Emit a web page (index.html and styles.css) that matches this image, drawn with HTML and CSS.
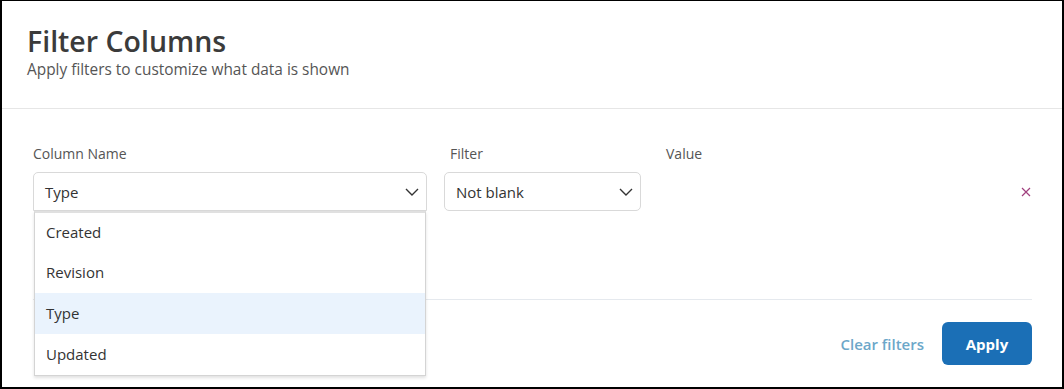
FILE: index.html
```html
<!DOCTYPE html>
<html lang="en">
<head>
    <meta charset="UTF-8">
    <meta name="viewport" content="width=device-width, initial-scale=1.0">
    <title>Filter Columns</title>
    <link rel="stylesheet" href="styles.css">
</head>
<body>
    <div class="dialog">
        <div class="dialog-header">
            <h1>Filter Columns</h1>
            <p>Apply filters to customize what data is shown</p>
        </div>

        <div class="dialog-body">
            <div class="filter-grid">
                <label class="field-label">Column Name</label>
                <label class="field-label filter-label">Filter</label>
                <label class="field-label value-label">Value</label>
                <span></span>

                <div class="select-wrap">
                    <div class="select open">
                        <span>Type</span>
                        <svg class="chevron" width="14" height="8" viewBox="0 0 14 8"><path d="M1 1l6 6 6-6" fill="none" stroke="#333" stroke-width="1.4"/></svg>
                    </div>
                    <ul class="dropdown">
                        <li>Created</li>
                        <li>Revision</li>
                        <li class="active">Type</li>
                        <li>Updated</li>
                    </ul>
                </div>
                <div class="select">
                    <span>Not blank</span>
                    <svg class="chevron" width="14" height="8" viewBox="0 0 14 8"><path d="M1 1l6 6 6-6" fill="none" stroke="#333" stroke-width="1.4"/></svg>
                </div>
                <div></div>
                <button class="remove" title="Remove">
                    <svg width="10" height="10" viewBox="0 0 10 10"><path d="M1 1l8 8M9 1l-8 8" stroke="#a0407e" stroke-width="1.2"/></svg>
                </button>
            </div>

            <div class="dialog-footer">
                <button class="link-btn">Clear filters</button>
                <button class="primary-btn">Apply</button>
            </div>
        </div>
    </div>
</body>
</html>
```

FILE: styles.css
```css
body {
    font-family: "Open Sans", Arial, sans-serif;
    margin: 0;
    padding: 0;
    background: #fff;
}
.dialog {
    width: 1064px;
    height: 389px;
    box-sizing: border-box;
    border: 2px solid #000;
    border-top-width: 1px;
    overflow: hidden;
}
.dialog-header {
    padding: 21px 25px 29px;
    border-bottom: 1px solid #e6e6e6;
}
.dialog-header h1 {
    margin: 0;
    font-size: 28.5px;
    font-weight: 600;
    line-height: 38px;
    color: #3b3b3b;
}
.dialog-header p {
    margin: 0;
    font-size: 15.4px;
    line-height: 19px;
    color: #555;
}
.dialog-body {
    padding: 35px 30px 0 31px;
}
.filter-grid {
    display: grid;
    grid-template-columns: 394px 197px 1fr 13px;
    column-gap: 17px;
    row-gap: 8px;
    align-items: center;
}
.field-label {
    font-size: 14px;
    line-height: 20px;
    color: #555;
}
.filter-label {
    padding-left: 6px;
}
.value-label {
    margin-left: -17px;
    padding-left: 25px;
}
.select-wrap {
    position: relative;
}
.select {
    height: 39px;
    box-sizing: border-box;
    border: 1px solid #d9d9d9;
    border-radius: 5px;
    display: flex;
    align-items: center;
    justify-content: space-between;
    padding: 0 7px 0 11px;
    font-size: 15px;
    color: #333;
}
.select.open {
    border-bottom-left-radius: 0;
    border-bottom-right-radius: 0;
}
.dropdown {
    position: absolute;
    top: 39px;
    left: 1px;
    right: 1px;
    margin: 0;
    padding: 0;
    list-style: none;
    background: #fff;
    border: 1px solid #d4d4d4;
    border-top: 2px solid #e0e0e0;
    box-shadow: 0 2px 3px rgba(0, 0, 0, 0.12);
    z-index: 2;
}
.dropdown li {
    height: 41px;
    line-height: 41px;
    padding: 0 11px;
    font-size: 15px;
    color: #333;
}
.dropdown li:first-child {
    height: 39px;
    line-height: 39px;
}
.dropdown li.active {
    background: #eaf3fd;
}
.remove {
    border: 0;
    background: none;
    padding: 0;
    display: flex;
    justify-content: center;
    align-items: center;
    cursor: pointer;
}
.dialog-footer {
    margin-top: 88px;
    border-top: 1px solid #e5e9ee;
    padding-top: 22px;
    display: flex;
    justify-content: flex-end;
    align-items: center;
    gap: 18px;
}
.link-btn {
    border: 0;
    background: none;
    padding: 0;
    font-family: inherit;
    font-size: 15px;
    font-weight: 600;
    color: #6ca7c9;
}
.primary-btn {
    width: 90px;
    height: 43px;
    border: 0;
    border-radius: 6px;
    background: #1b6fb6;
    color: #fff;
    font-family: inherit;
    font-size: 15px;
    font-weight: 700;
}
```
